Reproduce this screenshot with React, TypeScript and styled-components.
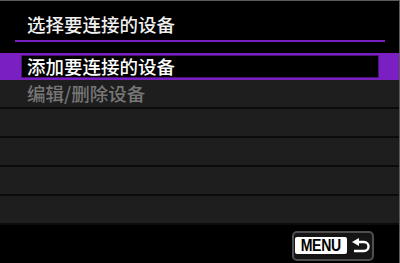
import React from 'react';
import styled, { createGlobalStyle } from 'styled-components';

const GlobalStyle = createGlobalStyle`
  html, body {
    margin: 0;
    padding: 0;
    background: #000;
  }
  body {
    font-family: "Noto Sans CJK SC", "Noto Sans", sans-serif;
  }
`;

const PURPLE = '#7a20c2';

const Screen = styled.div`
  width: 400px;
  height: 263px;
  box-sizing: border-box;
  background: #000;
  border-top: 1px solid #5a5a5a;
  border-right: 1px solid #5a5a5a;
  display: flex;
  flex-direction: column;
  overflow: hidden;
`;

const Header = styled.div`
  height: 39px;
  display: flex;
  align-items: center;
  padding: 7px 0 0 27px;
  box-sizing: border-box;
  color: #f0f0f0;
  font-size: 18.5px;
  font-weight: 500;
  line-height: 1;
`;

const Rule = styled.div`
  height: 2px;
  margin: 0 14px 0 15px;
  background: ${PURPLE};
`;

const List = styled.div`
  margin-top: 11px;
  display: flex;
  flex-direction: column;
`;

const SelectedRow = styled.div`
  height: 27px;
  background: ${PURPLE};
  padding: 2px 20px 2px 21px;
  box-sizing: border-box;
  display: flex;
`;

const SelectedInner = styled.div`
  flex: 1;
  background: #000;
  border: 1px solid #4a1478;
  display: flex;
  align-items: center;
  padding-left: 5px;
  color: #ffffff;
  font-size: 18.5px;
  font-weight: 500;
  line-height: 1;
`;

const Row = styled.div<{ $dim?: boolean }>`
  height: 29px;
  box-sizing: border-box;
  background: #1e1e1e;
  border-bottom: 2px solid #0b0b0b;
  display: flex;
  align-items: center;
  padding-left: 27px;
  color: ${(p) => (p.$dim ? '#767676' : '#eee')};
  font-size: 18.5px;
  font-weight: 500;
  line-height: 1;
`;

const Footer = styled.div`
  flex: 1;
  display: flex;
  justify-content: flex-end;
  align-items: center;
  padding-right: 25px;
  padding-top: 3px;
`;

const MenuButton = styled.div`
  width: 82px;
  height: 30px;
  box-sizing: border-box;
  border: 2px solid #4e4e4e;
  border-radius: 5px;
  background: #151515;
  display: flex;
  align-items: center;
  padding-left: 1px;
  gap: 4px;
`;

const MenuLabel = styled.div`
  width: 52px;
  height: 17px;
  background: #fff;
  border-radius: 2px;
  display: flex;
  align-items: center;
  justify-content: center;
  overflow: hidden;
  color: #000;
  font-family: "Liberation Sans", Arial, sans-serif;
  font-weight: bold;
  font-size: 16px;
  line-height: 1;
  letter-spacing: -0.4px;
`;

const MenuText = styled.span`
  display: inline-block;
  transform: scaleX(0.88);
`;

const ReturnIcon = () => (
  <svg width="21" height="18" viewBox="0 0 21 18">
    <path d="M1 5 L8 1 L8 9 Z" fill="#fff" />
    <path d="M7 5 H13 A4.5 4.5 0 0 1 13 14 H3" stroke="#fff" strokeWidth="2.4" fill="none" />
  </svg>
);

export default function App() {
  return (
    <>
      <GlobalStyle />
      <Screen>
        <Header>选择要连接的设备</Header>
        <Rule />
        <List>
          <SelectedRow>
            <SelectedInner>添加要连接的设备</SelectedInner>
          </SelectedRow>
          <Row $dim>编辑/删除设备</Row>
          <Row />
          <Row />
          <Row />
          <Row />
        </List>
        <Footer>
          <MenuButton>
            <MenuLabel>
              <MenuText>MENU</MenuText>
            </MenuLabel>
            <ReturnIcon />
          </MenuButton>
        </Footer>
      </Screen>
    </>
  );
}
